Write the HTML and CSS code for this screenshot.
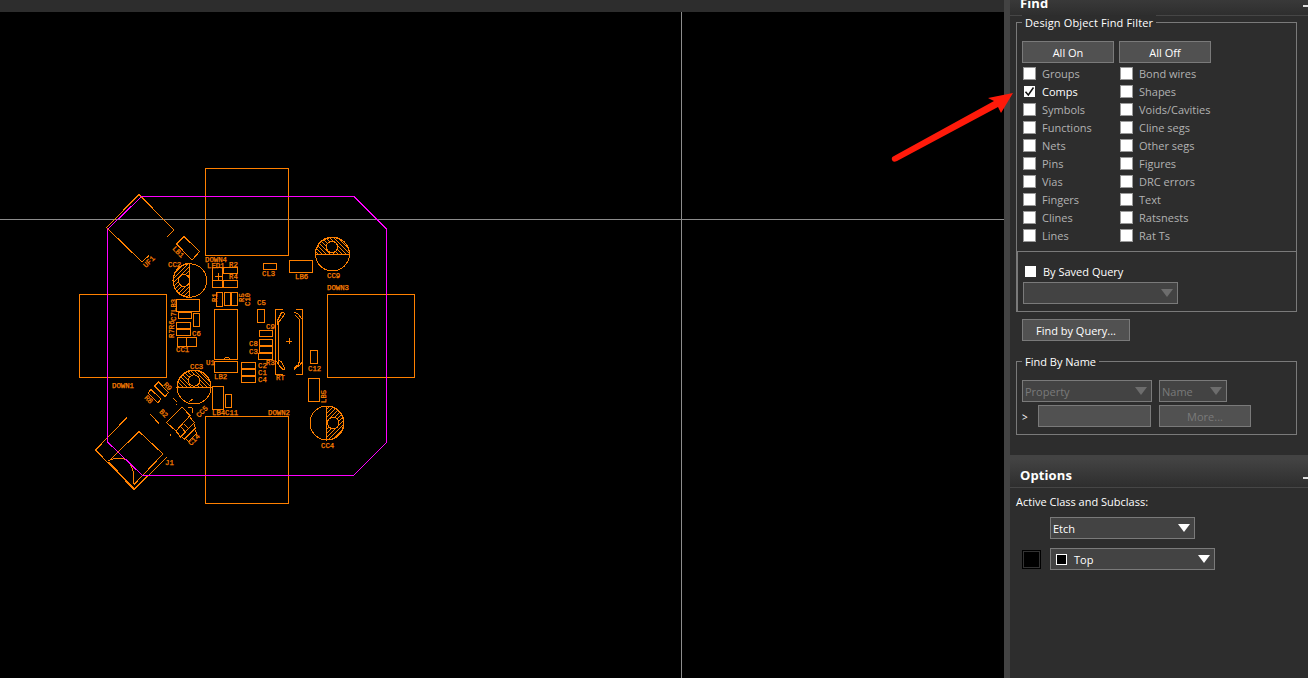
FILE: index.html
```html
<!DOCTYPE html>
<html lang="en">
<head>
<meta charset="utf-8">
<title>PCB Editor</title>
<link rel="stylesheet" href="styles.css">
</head>
<body>
<div class="app">
  <main class="workspace">
    <div class="ruler"></div>
    <svg class="board" viewBox="0 12 1004 666" width="1004" height="666">
      <defs>
        <pattern id="hatch-fwd" width="4" height="4" patternUnits="userSpaceOnUse"><path d="M-1 1L1-1M-1 5L5-1M3 5L5 3"/></pattern>
        <pattern id="hatch-back" width="4" height="4" patternUnits="userSpaceOnUse"><path d="M-1 3L1 5M-1-1L5 5M3-1L5 1"/></pattern>
      </defs>
      <path class="cross" d="M0 219.5H1004M681.5 12V678"/>
      <g class="parts">
        <!-- edge connectors -->
        <path d="M205.5 168.5h83v87h-83zM327.5 294.5h87v83h-87zM79.5 294.5h87v83h-87zM205.5 416.5h83v87h-83z"/>
        <path d="M149 255.5L142 262 106.5 227.5 139 194.5 174 230 167 237"/>
        <path d="M184 236.5L199.5 251.5 192 260 176.5 244z"/>
        <!-- two-pin parts -->
        <path d="M212.5 267.5h10v20h-10zM218 273v7M214.5 276.500h7M212.500 280.500h10M223.500 267.500h14v6h-14zM223.500 280.500h14v7h-14zM263.500 263.500h13v6h-13zM289.500 260.500h23v12h-23z"/>
        <path d="M216.500 292.500h6v14h-6zM224.500 292.500h6v13h-6zM231.500 292.500h6v13h-6zM214.500 309.500h23v50h-23zM223 359.500l3-2h2l3 2"/>
        <path d="M176.500 299.500h23v12h-23zM178.500 312.500h13v6h-13zM193.500 313.500h6v13h-6zM176.500 322.500h14v6h-14zM176.500 329.500h14v6h-14zM177.500 337.500h19v9h-19zM186.500 337.500v9"/>
        <path d="M257.500 309.500h7v13h-7zM259.500 330.500h13v6h-13zM259.500 339.500h13v6h-13zM259.500 346.500h13v6h-13zM258.500 353.500h14v6h-14z"/>
        <path d="M241.500 362.500h14v6h-14zM241.500 369.500h14v6h-14zM241.500 376.500h14v6h-14zM310.500 350.500h7v13h-7zM308.500 378.500h11v23h-11zM214.500 361.500h23v11h-23zM212.500 386.500h11v23h-11zM225.500 394.500h6v13h-6z"/>
        <!-- crystal -->
        <path d="M283 309.500h-7.500v65h7.500M296 309.500h6.500v65h-6.500M278.500 321v42M299.500 321v42M283.500 312.500h-2l-4 8v4M284 313v2l-5 7M294.500 312.500l3 1 5 6M295 315l4 4v2M276.500 361l3 5 3.500 3.500h2M278.500 360l3 2 2.500 5v2M302 362l-2 3-6 4M299 362l-1 3-4 3v2M286 341.500h6M289 338v6"/>
        <!-- electrolytic capacitors -->
        <g class="round">
          <path fill="url(#hatch-fwd)" d="M189.500 263.500a16.500 17 0 0 0 0 34z"/><circle cx="190" cy="280.500" r="16.700"/><circle class="hub" cx="184" cy="280.500" r="5.800"/><path d="M189.500 263v35"/>
          <path fill="url(#hatch-back)" d="M315.500 254.500a17 17 0 0 1 34 0z"/><circle cx="332.400" cy="254" r="17"/><circle class="hub" cx="332" cy="247" r="5.700"/><path d="M315 254.500h35"/>
          <path fill="url(#hatch-back)" d="M177 387.500a17 17 0 0 1 34 0z"/><circle cx="194" cy="387" r="17"/><circle class="hub" cx="194" cy="380.500" r="5.700"/><path d="M177 387.500h34"/>
          <path fill="url(#hatch-fwd)" d="M326.500 406a17 17 0 0 1 0 34z"/><circle cx="327" cy="423" r="17"/><circle class="hub" cx="333.300" cy="423" r="5.800"/><path d="M326.500 406v34"/>
        </g>
        <!-- parts placed at 45 degrees -->
        <path d="M127 417.500L95.500 450 134 489.500 166.500 457.500M108.500 461.500L139 431.500 163 454 134 484.500M108.500 460.500q15-6 21.500 3 5 8 3.500 21M108.500 462L134 488"/>
        <path d="M150 414l9 9.500M173 398l4.500 4.500M151 389.500l10 9.500-3 4-10-10zM158.500 382l10 10.500-3.500 4-10.500-10.500zM182 407l8 8.500-14 15.500-9.500-8.500z"/>
        <path d="M190 417.500l4.500 5-14 14.500-4.500-6M194 424l1.500 4-11 11-4-3M195.500 430.500l1 3-8 8-3-3M181 427l4.500 5M184 424l4.500 4.500M189 402l4-3M188 407l4 1 1 5M170.500 434v2M176.500 404v1"/>
      </g>
      <g class="outline"><path d="M141.500 196.500H354L386.500 229V442.500L353.500 475.500H142.500L107.500 442V229.500z"/></g>
      <g class="marks">
        <text x="205" y="261.500" textLength="22">DOWN4</text>
        <text x="327" y="289.500" textLength="22">DOWN3</text>
        <text x="112" y="388" textLength="22">DOWN1</text>
        <text x="268" y="415" textLength="22">DOWN2</text>
        <text x="207" y="267.500">LED1</text><text x="229" y="267">R2</text><text x="229" y="279">R4</text>
        <text x="168" y="267">CC2</text><text x="262" y="276">CL3</text><text x="295" y="279">LB6</text><text x="327" y="278">CC9</text>
        <text x="192" y="335.500">C6</text><text x="176" y="352">CC1</text><text x="257" y="305">C5</text><text x="266" y="329">C9</text>
        <text x="249" y="346">C8</text><text x="249" y="353.500">C3</text><text x="266" y="365">R3</text>
        <text x="258" y="368">C2</text><text x="258" y="375">C1</text><text x="258" y="382">C4</text><text x="276" y="380">RT</text>
        <text x="308" y="371">C12</text><text x="206" y="365">U1</text><text x="190" y="369">CC3</text><text x="214" y="379">LB2</text>
        <text x="212" y="415">LB4</text><text x="225" y="415">C11</text><text x="321" y="448">CC4</text><text x="165" y="465">J1</text>
        <text transform="translate(176 312) rotate(-90)">LB3</text><text transform="translate(176 321) rotate(-90)">C7</text>
        <text transform="translate(174 338) rotate(-90)">R7R6</text><text transform="translate(217 302) rotate(-90)">R1</text>
        <text transform="translate(244 302) rotate(-90)">R5</text><text transform="translate(250 306) rotate(-90)">C10</text>
        <text transform="translate(326 403) rotate(-90)">LB5</text><text transform="translate(146 268) rotate(-45)">UF1</text>
        <text transform="translate(172 249) rotate(45)">LB1</text><text transform="translate(144 398) rotate(45)">R8</text>
        <text transform="translate(163 385) rotate(45)">R9</text><text transform="translate(159 412) rotate(45)">B2</text>
        <text transform="translate(199 418) rotate(-45)">CC5</text><text transform="translate(191 446) rotate(-45)">C14</text>
      </g>
    </svg>
  </main>

  <aside class="dock">
    <section class="panel find">
      <header class="title title-find">Find<i class="minimize"></i></header>
      <div class="group filter">
        <div class="caption">Design Object Find Filter</div>
        <div class="pair"><button class="btn">All On</button><button class="btn">All Off</button></div>
        <div class="checks">
          <label><i class="box"></i>Groups</label><label><i class="box"></i>Bond wires</label>
          <label class="on"><i class="box"><svg width="11" height="11" viewBox="0 0 11 11"><path d="M1.500 5.800L4.300 9 9.500 1.500"/></svg></i>Comps</label><label><i class="box"></i>Shapes</label>
          <label><i class="box"></i>Symbols</label><label><i class="box"></i>Voids/Cavities</label>
          <label><i class="box"></i>Functions</label><label><i class="box"></i>Cline segs</label>
          <label><i class="box"></i>Nets</label><label><i class="box"></i>Other segs</label>
          <label><i class="box"></i>Pins</label><label><i class="box"></i>Figures</label>
          <label><i class="box"></i>Vias</label><label><i class="box"></i>DRC errors</label>
          <label><i class="box"></i>Fingers</label><label><i class="box"></i>Text</label>
          <label><i class="box"></i>Clines</label><label><i class="box"></i>Ratsnests</label>
          <label><i class="box"></i>Lines</label><label><i class="box"></i>Rat Ts</label>
        </div>
        <div class="saved">
          <label class="on"><i class="box"></i>By Saved Query</label>
          <div class="select off query"><span></span><i class="arrow"></i></div>
        </div>
      </div>
      <button class="btn find-query">Find by Query...</button>
      <div class="group by-name">
        <div class="caption">Find By Name</div>
        <div class="row"><div class="select off property"><span>Property</span><i class="arrow"></i></div><div class="select off name"><span>Name</span><i class="arrow"></i></div></div>
        <div class="row second"><span class="prompt">&gt;</span><div class="field"></div><button class="btn dim">More...</button></div>
      </div>
    </section>
    <section class="panel options">
      <header class="title title-options">Options<i class="minimize"></i></header>
      <div class="label">Active Class and Subclass:</div>
      <div class="select etch"><span>Etch</span><i class="arrow"></i></div>
      <div class="layer"><i class="swatch"></i><div class="select top"><i class="chip"></i><span>Top</span><i class="arrow"></i></div></div>
    </section>
  </aside>
  <svg class="pointer" width="130" height="80" viewBox="888 86 130 80"><path d="M894 156L994 101 988 98 1013 93 1001 113 998 107 897 161Q893 163 892 160 891 157 894 156z"/></svg>
</div>
</body>
</html>
```
FILE: styles.css
```css
* { box-sizing: border-box; }
body { margin: 0; background: #2d2d2d; font: 11px/16px "Open Sans", "Noto Sans", sans-serif; color: #fff; }
.app { display: flex; width: 1308px; height: 678px; overflow: hidden; position: relative; }
.workspace { width: 1004px; background: #000; }
.ruler { height: 12px; background: #2d2d2d; }
.board { display: block; }
.cross { stroke: #8c8c8c; fill: none; shape-rendering: crispEdges; }
.parts, .outline { fill: none; stroke: #ff8000; stroke-width: 1; shape-rendering: crispEdges; }
.outline { stroke: #f0f; }
.board pattern path { fill: none; stroke: #ff8000; stroke-width: 1; }
.round .hub { fill: #000; }
.marks { fill: #ff8000; stroke: #ff8000; stroke-width: 0.25px; font: 7.3px "Liberation Mono", monospace; }

.dock { width: 304px; border-left: 6px solid #434343; background: #434343; }
.panel { background: #2d2d2d; overflow: hidden; }
.find { height: 455px; }
.options { height: 219px; margin-top: 4px; }
.title { display: flex; justify-content: space-between; padding-left: 10px; font-size: 13px; font-weight: 700; letter-spacing: 0.1px; border-bottom: 1px solid #464646; background: linear-gradient(#434343, #2e2e2e); }
.title-find { height: 16px; line-height: 7px; background: linear-gradient(#393939, #2e2e2e); }
.title-options { height: 29px; line-height: 33px; }
.minimize { width: 5px; height: 2px; background: #ddd; margin-top: 5px; }
.title-options .minimize { margin-top: 18px; }

.group { width: 281px; margin-left: 6px; border: 1px solid #7a7a7a; }
.caption { width: max-content; height: 16px; margin: -8px 0 0 5px; padding: 0 3px; background: #2d2d2d; letter-spacing: 0.14px; }
.filter { height: 290px; margin-top: 6px; }
.by-name .caption { letter-spacing: 0; }
.btn { display: block; width: 92px; height: 22px; border: 1px solid #7a7a7a; padding: 1px 0 0; background: #515151; color: #fff; font: inherit; line-height: 19px; text-align: center; }
.pair { display: flex; gap: 5px; margin: 10px 0 0 5px; }
.checks { display: grid; grid-template-columns: 97px 120px; grid-auto-rows: 18px; margin: 2px 0 0 6px; color: #b2b2b2; }
label { display: flex; align-items: center; gap: 6px; white-space: nowrap; }
.on { color: #fff; }
.box { width: 13px; height: 13px; margin-bottom: 1px; background: #fff; border: 1px solid #999; }
.box svg { display: block; fill: none; stroke: #111; stroke-width: 1.5; }
.on .box { border-color: #2d2d2d; }
.saved { height: 61px; margin-top: 6px; border: solid #7a7a7a; border-width: 1px 0 0 1px; padding: 12px 0 0 5px; }
.saved label { margin-left: 1px; }
.saved .box { margin-bottom: 2px; }
.select { display: flex; align-items: center; justify-content: space-between; height: 22px; border: 1px solid #7a7a7a; background: #434343; padding: 2px 4px 0 2px; }
.arrow { width: 12px; height: 8px; margin-top: -2px; background: #fff; clip-path: polygon(0 0, 100% 0, 50% 100%); }
.off { color: #7a7a7a; }
.off .arrow { background: #6d6d6d; }
.query { width: 155px; margin-top: 2px; }
.find-query { width: 108px; margin: 7px 0 0 12px; }
.by-name { height: 74px; margin-top: 20px; }
.row { display: flex; gap: 7px; margin: 10px 0 0 5px; }
.property { width: 130px; }
.name { width: 68px; }
.second { margin-top: 3px; gap: 8px; }
.prompt { width: 8px; font-size: 10px; line-height: 24px; }
.field { width: 113px; height: 22px; border: 1px solid #7a7a7a; background: #515151; }
.dim { color: #7a7a7a; }
.label { margin: 6px 0 0 6px; }
.etch { width: 145px; margin: 7px 0 0 40px; }
.layer { display: flex; align-items: center; gap: 9px; margin: 9px 0 0 12px; }
.swatch { width: 19px; height: 19px; border: 1px solid #000; background: #000; box-shadow: inset 0 0 0 1px #333; }
.top { width: 165px; padding-left: 5px; }
.chip { width: 11px; height: 11px; margin-top: -2px; border: 1px solid #fff; background: #000; }
.top span { flex: 1; padding-left: 7px; }
.pointer { position: absolute; left: 888px; top: 86px; fill: #ff1a0a; }
```
